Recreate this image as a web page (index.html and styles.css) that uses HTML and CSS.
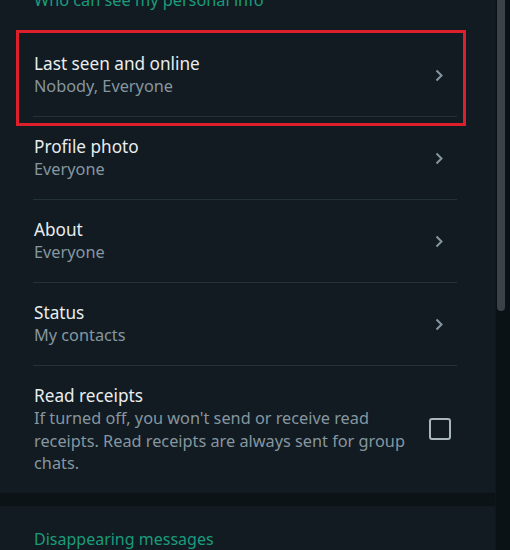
FILE: index.html
```html
<!DOCTYPE html>
<html>
<head>
<meta charset="utf-8">
<link rel="stylesheet" href="styles.css">
</head>
<body>
<div class="screen">
  <div class="content">
    <section class="panel panel-privacy">
      <div class="section-title top-title">Who can see my personal info</div>
      <div class="row">
        <div class="row-text">
          <div class="title">Last seen and online</div>
          <div class="sub">Nobody, Everyone</div>
        </div>
        <svg class="chev" width="8" height="13" viewBox="0 0 8 13"><path d="M1.5 1.5 L6.5 6.5 L1.5 11.5" fill="none" stroke="currentColor" stroke-width="2"/></svg>
      </div>
      <div class="row">
        <div class="row-text">
          <div class="title">Profile photo</div>
          <div class="sub">Everyone</div>
        </div>
        <svg class="chev" width="8" height="13" viewBox="0 0 8 13"><path d="M1.5 1.5 L6.5 6.5 L1.5 11.5" fill="none" stroke="currentColor" stroke-width="2"/></svg>
      </div>
      <div class="row">
        <div class="row-text">
          <div class="title">About</div>
          <div class="sub">Everyone</div>
        </div>
        <svg class="chev" width="8" height="13" viewBox="0 0 8 13"><path d="M1.5 1.5 L6.5 6.5 L1.5 11.5" fill="none" stroke="currentColor" stroke-width="2"/></svg>
      </div>
      <div class="row">
        <div class="row-text">
          <div class="title">Status</div>
          <div class="sub">My contacts</div>
        </div>
        <svg class="chev" width="8" height="13" viewBox="0 0 8 13"><path d="M1.5 1.5 L6.5 6.5 L1.5 11.5" fill="none" stroke="currentColor" stroke-width="2"/></svg>
      </div>
      <div class="row row-last">
        <div class="row-text">
          <div class="title">Read receipts</div>
          <div class="sub">If turned off, you won't send or receive read receipts. Read receipts are always sent for group chats.</div>
        </div>
        <span class="checkbox"></span>
      </div>
      <div class="highlight"></div>
    </section>
    <section class="panel panel-disappear">
      <div class="section-title">Disappearing messages</div>
    </section>
  </div>
  <div class="scrollbar"><div class="thumb"></div></div>
</div>
</body>
</html>
```
FILE: styles.css
```css
html, body {
  margin: 0;
  padding: 0;
  background: #0c1317;
  overflow: hidden;
}
body {
  font-family: "Noto Sans", "Open Sans", sans-serif;
  width: 510px;
  height: 550px;
}
.screen {
  display: flex;
  height: 550px;
}
.content {
  width: 496px;
  display: flex;
  flex-direction: column;
  gap: 13px;
}
.panel {
  background: #111b21;
  position: relative;
}
.panel-privacy {
  margin-top: -20px;
}
.section-title {
  color: #1b9b7c;
  font-size: 16px;
  line-height: 22px;
  padding-left: 34px;
}
.top-title {
  height: 24px;
  padding-top: 8px;
  padding-bottom: 22px;
  line-height: 24px;
  font-size: 16.3px;
}
.row {
  margin: 0 38px 0 33px;
  padding: 18px 14px 18px 1px;
  display: flex;
  align-items: center;
  border-bottom: 1px solid #233138;
  min-height: 46px;
}
.row-last {
  border-bottom: none;
  padding-right: 6px;
}
.row-text {
  flex: 1;
}
.title {
  color: #e9edef;
  font-size: 17.2px;
  line-height: 23px;
}
.sub {
  color: #8696a0;
  font-size: 16.3px;
  line-height: 22.5px;
  max-width: 380px;
}
.chev {
  color: #8696a0;
  flex: none;
}
.checkbox {
  width: 18px;
  height: 18px;
  border: 2px solid #aab6bd;
  border-radius: 3px;
  flex: none;
  margin-left: 16px;
}
.highlight {
  position: absolute;
  left: 16px;
  top: 50px;
  width: 444px;
  height: 90px;
  border: 3px solid #dc1f2b;
}
.panel-disappear {
  flex: 1;
  padding-top: 22px;
}
.scrollbar {
  width: 14px;
  background: #0b1216;
  position: relative;
  border-left: 1px solid #0e171c;
}
.thumb {
  position: absolute;
  left: 1px;
  top: 0;
  width: 8px;
  height: 311px;
  background: #3a4348;
  border-radius: 0 0 4px 4px;
}
```
